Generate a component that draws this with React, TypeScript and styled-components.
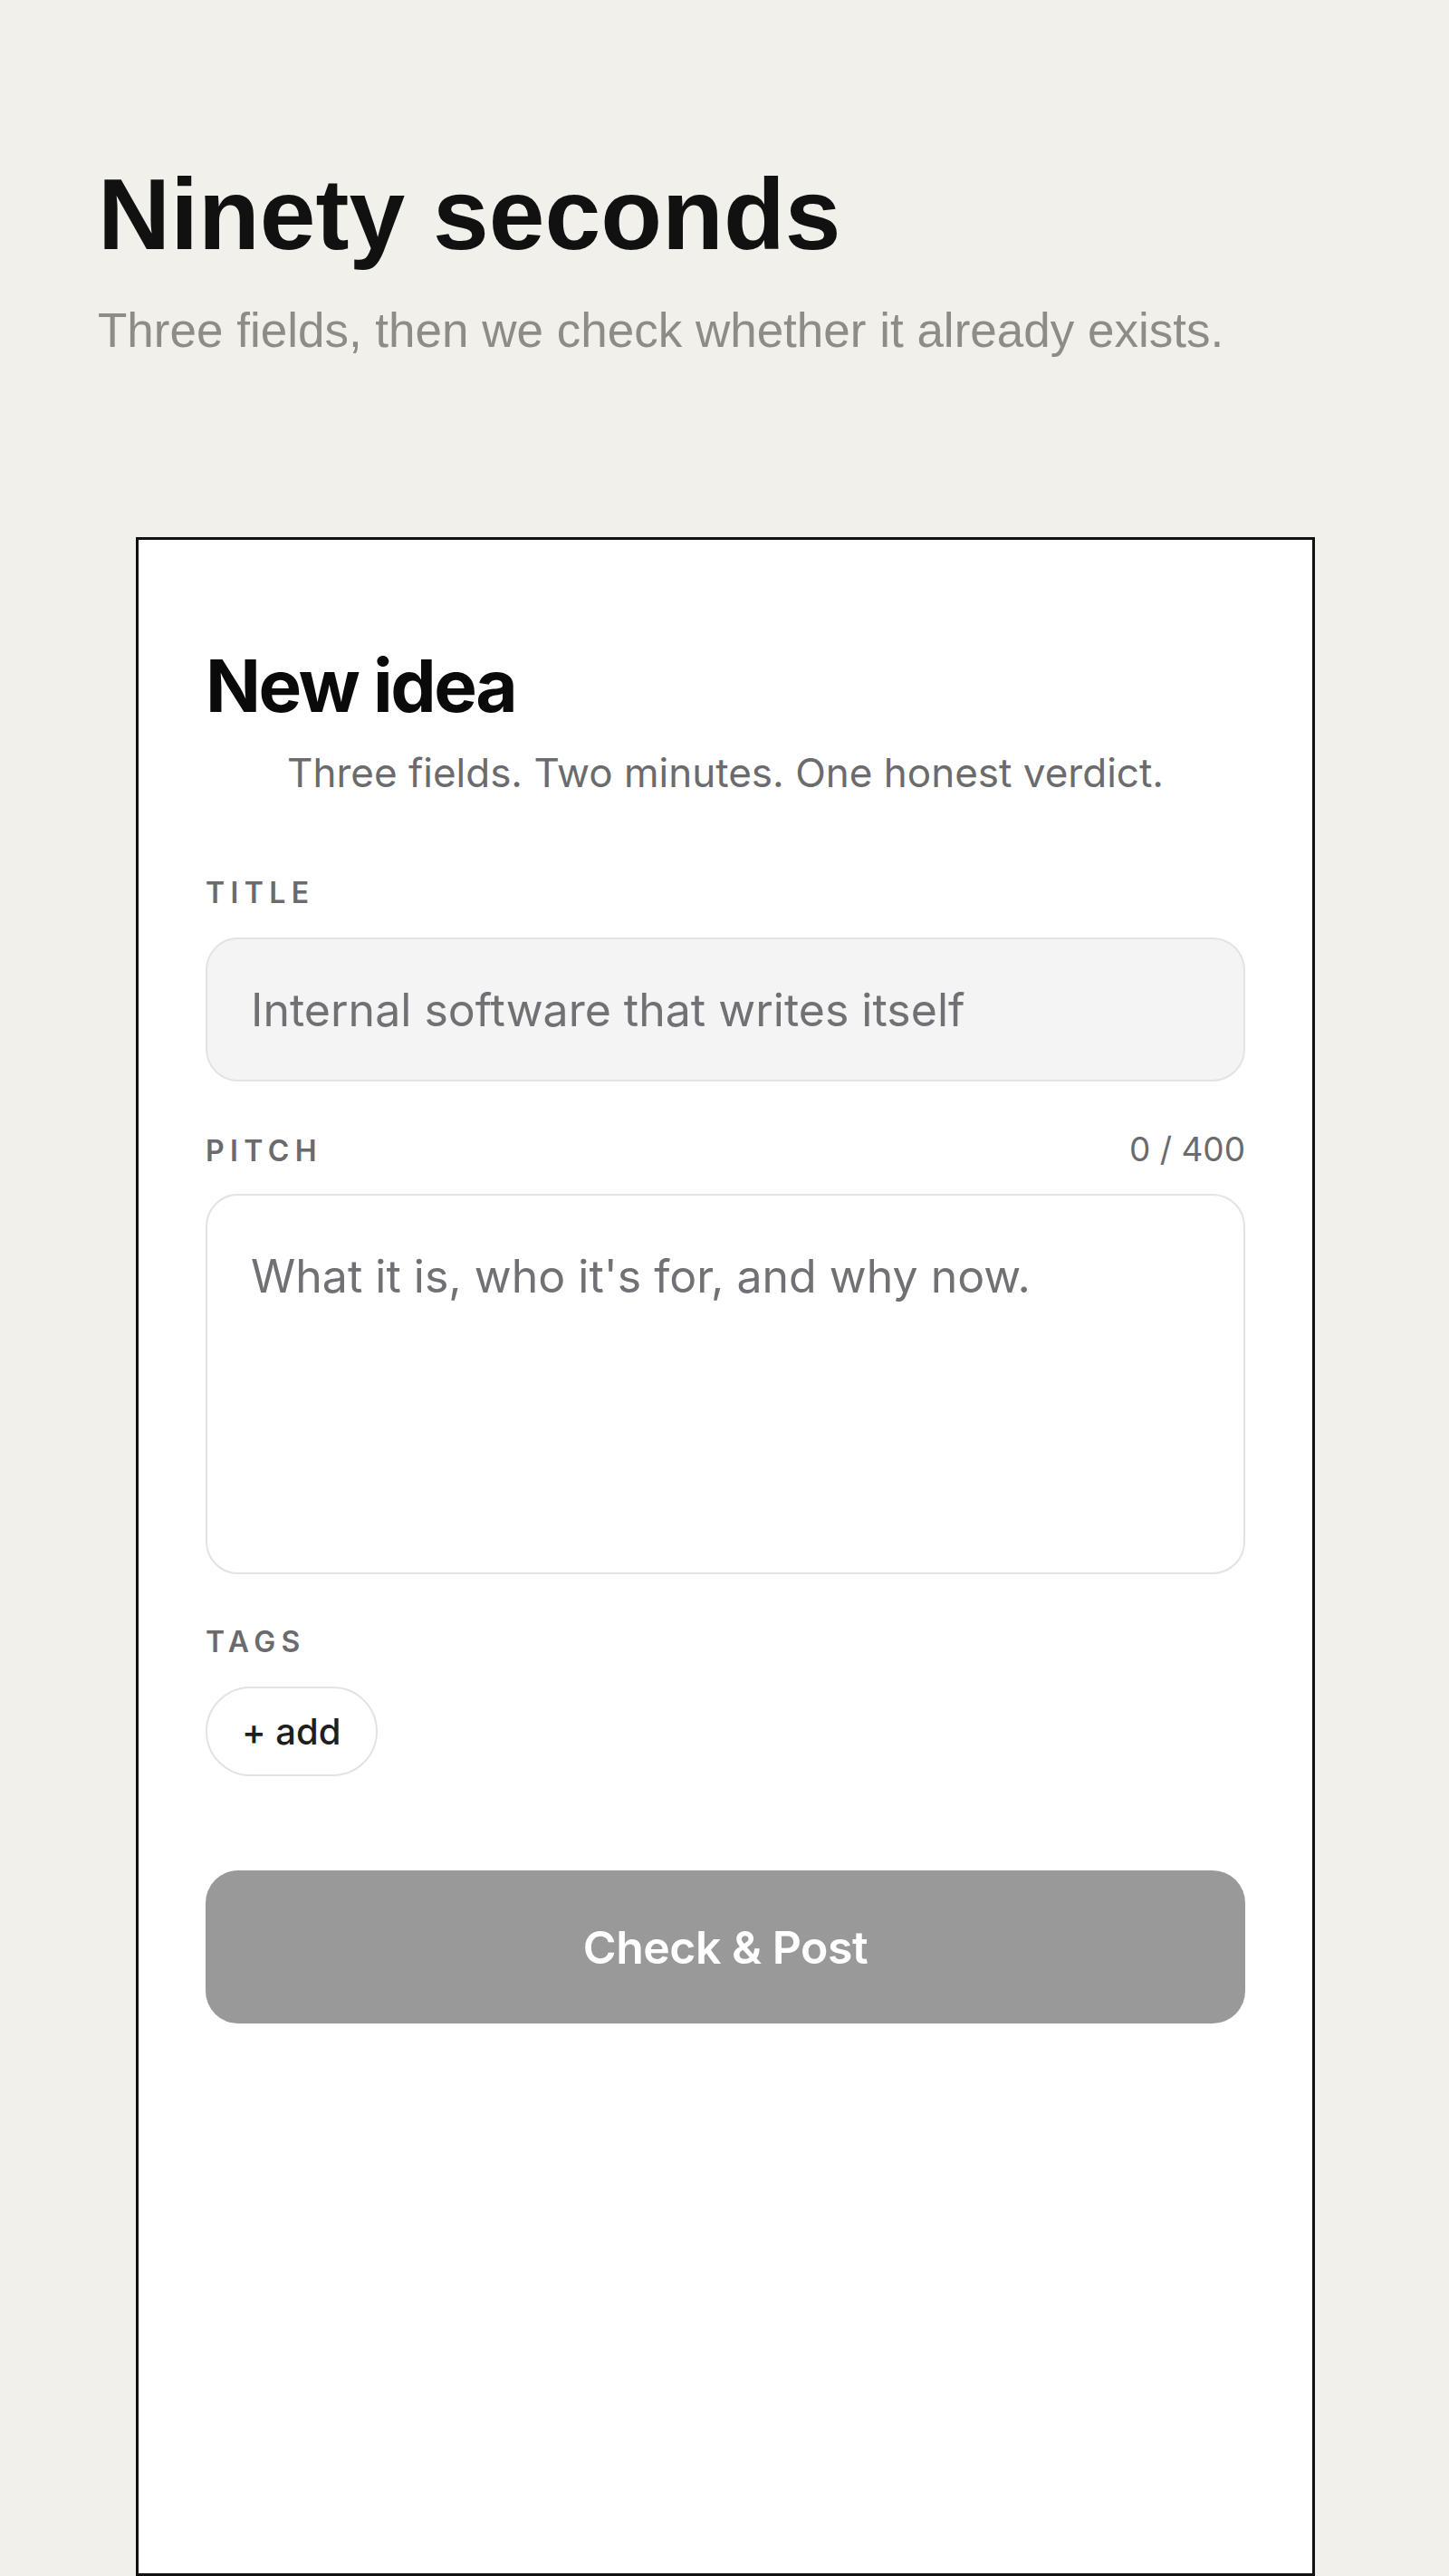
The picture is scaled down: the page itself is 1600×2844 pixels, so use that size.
import styled, { createGlobalStyle } from 'styled-components';

const GlobalStyle = createGlobalStyle`
  html, body {
    margin: 0;
    padding: 0;
    background: #f1f0eb;
  }
  * {
    box-sizing: border-box;
  }
`;

const Page = styled.main`
  width: 1600px;
  height: 2844px;
  overflow: hidden;
  background: #f1f0eb;
  display: flex;
  flex-direction: column;
`;

const Header = styled.header`
  padding: 177px 108px 0;
  font-family: 'Liberation Sans', Arial, sans-serif;
`;

const Heading = styled.h1`
  margin: 0;
  font-size: 111px;
  line-height: 121px;
  font-weight: 700;
  color: #111111;
`;

const Lead = styled.p`
  margin: 33px 0 0;
  font-size: 53px;
  line-height: 67px;
  color: #8e8c85;
`;

const Card = styled.section`
  margin: 195px 0 0 150px;
  width: 1302px;
  height: 2251px;
  background: #ffffff;
  border: 3px solid #111111;
  padding: 113px 74px 0;
  font-family: Inter, 'Noto Sans', sans-serif;
  display: flex;
  flex-direction: column;
`;

const CardTitle = styled.h2`
  margin: 0;
  font-size: 80px;
  line-height: 96px;
  font-weight: 700;
  letter-spacing: -0.03em;
  color: #0a0a0a;
`;

const CardLead = styled.p`
  margin: 17px 0 0;
  font-size: 44px;
  line-height: 63px;
  text-align: center;
  color: #6b6b6e;
`;

const Field = styled.div<{ $first?: boolean }>`
  margin-top: ${({ $first }) => ($first ? '81px' : '55px')};
  display: flex;
  flex-direction: column;
`;

const LabelRow = styled.div`
  height: 40px;
  margin-bottom: 29px;
  display: flex;
  align-items: baseline;
  justify-content: space-between;
  line-height: 40px;
`;

const Label = styled.label`
  font-size: 32px;
  font-weight: 600;
  letter-spacing: 0.2em;
  color: #6b6b6e;
`;

const Counter = styled.span`
  font-size: 37px;
  color: #6b6b6e;
`;

const TextInput = styled.input`
  height: 159px;
  width: 100%;
  padding: 0 48px;
  border: 2px solid #e3e3e3;
  border-radius: 36px;
  background: #f4f4f4;
  font-family: Inter, 'Noto Sans', sans-serif;
  font-size: 50px;
  color: #111111;
  outline: none;

  &::placeholder {
    color: #707075;
  }
`;

const TextArea = styled.textarea`
  height: 420px;
  width: 100%;
  padding: 52px 48px;
  border: 2px solid #e3e3e3;
  border-radius: 36px;
  background: #ffffff;
  font-family: Inter, 'Noto Sans', sans-serif;
  font-size: 50px;
  line-height: 1.5;
  color: #111111;
  resize: none;
  outline: none;

  &::placeholder {
    color: #707075;
  }
`;

const TagRow = styled.div`
  display: flex;
  gap: 16px;
`;

const AddTag = styled.button`
  height: 99px;
  padding: 0 38px;
  border: 2px solid #e3e3e3;
  border-radius: 999px;
  background: #ffffff;
  font-family: Inter, 'Noto Sans', sans-serif;
  font-size: 40px;
  font-weight: 500;
  color: #1f1f1f;
`;

const Submit = styled.button`
  margin-top: 104px;
  height: 169px;
  width: 100%;
  border: none;
  border-radius: 36px;
  background: #999999;
  font-family: Inter, 'Noto Sans', sans-serif;
  font-size: 50px;
  font-weight: 600;
  letter-spacing: -0.01em;
  color: #ffffff;
`;

export default function App() {
  return (
    <>
      <GlobalStyle />
      <Page>
        <Header>
          <Heading>Ninety seconds</Heading>
          <Lead>Three fields, then we check whether it already exists.</Lead>
        </Header>

        <Card>
          <CardTitle>New idea</CardTitle>
          <CardLead>Three fields. Two minutes. One honest verdict.</CardLead>

          <Field $first>
            <LabelRow>
              <Label htmlFor='title'>TITLE</Label>
            </LabelRow>
            <TextInput id='title' placeholder='Internal software that writes itself' />
          </Field>

          <Field>
            <LabelRow>
              <Label htmlFor='pitch'>PITCH</Label>
              <Counter>0 / 400</Counter>
            </LabelRow>
            <TextArea id='pitch' placeholder="What it is, who it's for, and why now." />
          </Field>

          <Field>
            <LabelRow>
              <Label>TAGS</Label>
            </LabelRow>
            <TagRow>
              <AddTag type='button'>+ add</AddTag>
            </TagRow>
          </Field>

          <Submit type='button'>Check &amp; Post</Submit>
        </Card>
      </Page>
    </>
  );
}
